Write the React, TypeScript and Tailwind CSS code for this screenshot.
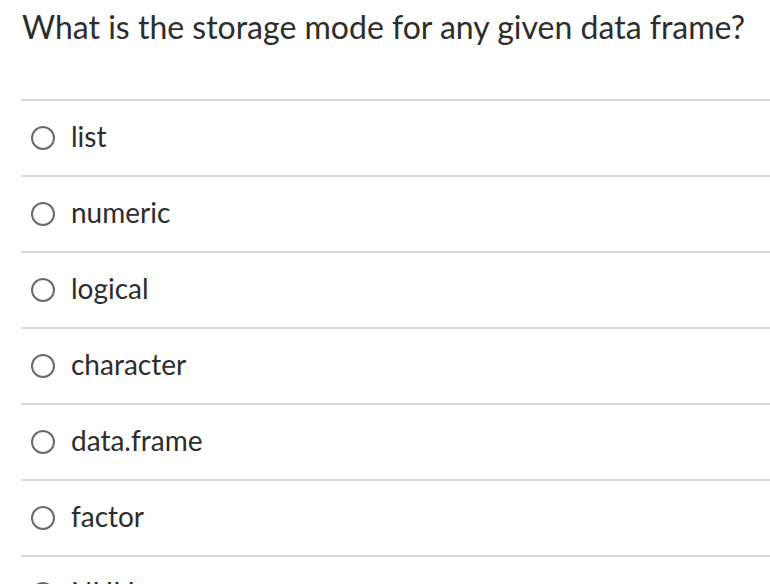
import React from 'react';

const options = ['list', 'numeric', 'logical', 'character', 'data.frame', 'factor', 'NULL'];

const App: React.FC = () => {
  return (
    <div className="bg-white h-[584px] overflow-hidden" style={{ fontFamily: 'Lato, "Noto Sans", sans-serif' }}>
      <div className="pl-[21px]">
        <div className="h-[99px] pl-px pt-[7px] text-[32px] leading-[40px] text-[#2d2d2d]">
          What is the storage mode for any given data frame?
        </div>
        {options.map((opt) => (
          <div key={opt} className="h-[76px] border-t-2 border-[#dadada] flex items-center">
            <span className="ml-[10px] w-6 h-6 rounded-full border-2 border-[#6b6b6b] shrink-0" />
            <span className="ml-[16px] mb-[4px] text-[28px] leading-[30px] text-[#2d2d2d]">{opt}</span>
          </div>
        ))}
      </div>
    </div>
  );
};

export default App;
